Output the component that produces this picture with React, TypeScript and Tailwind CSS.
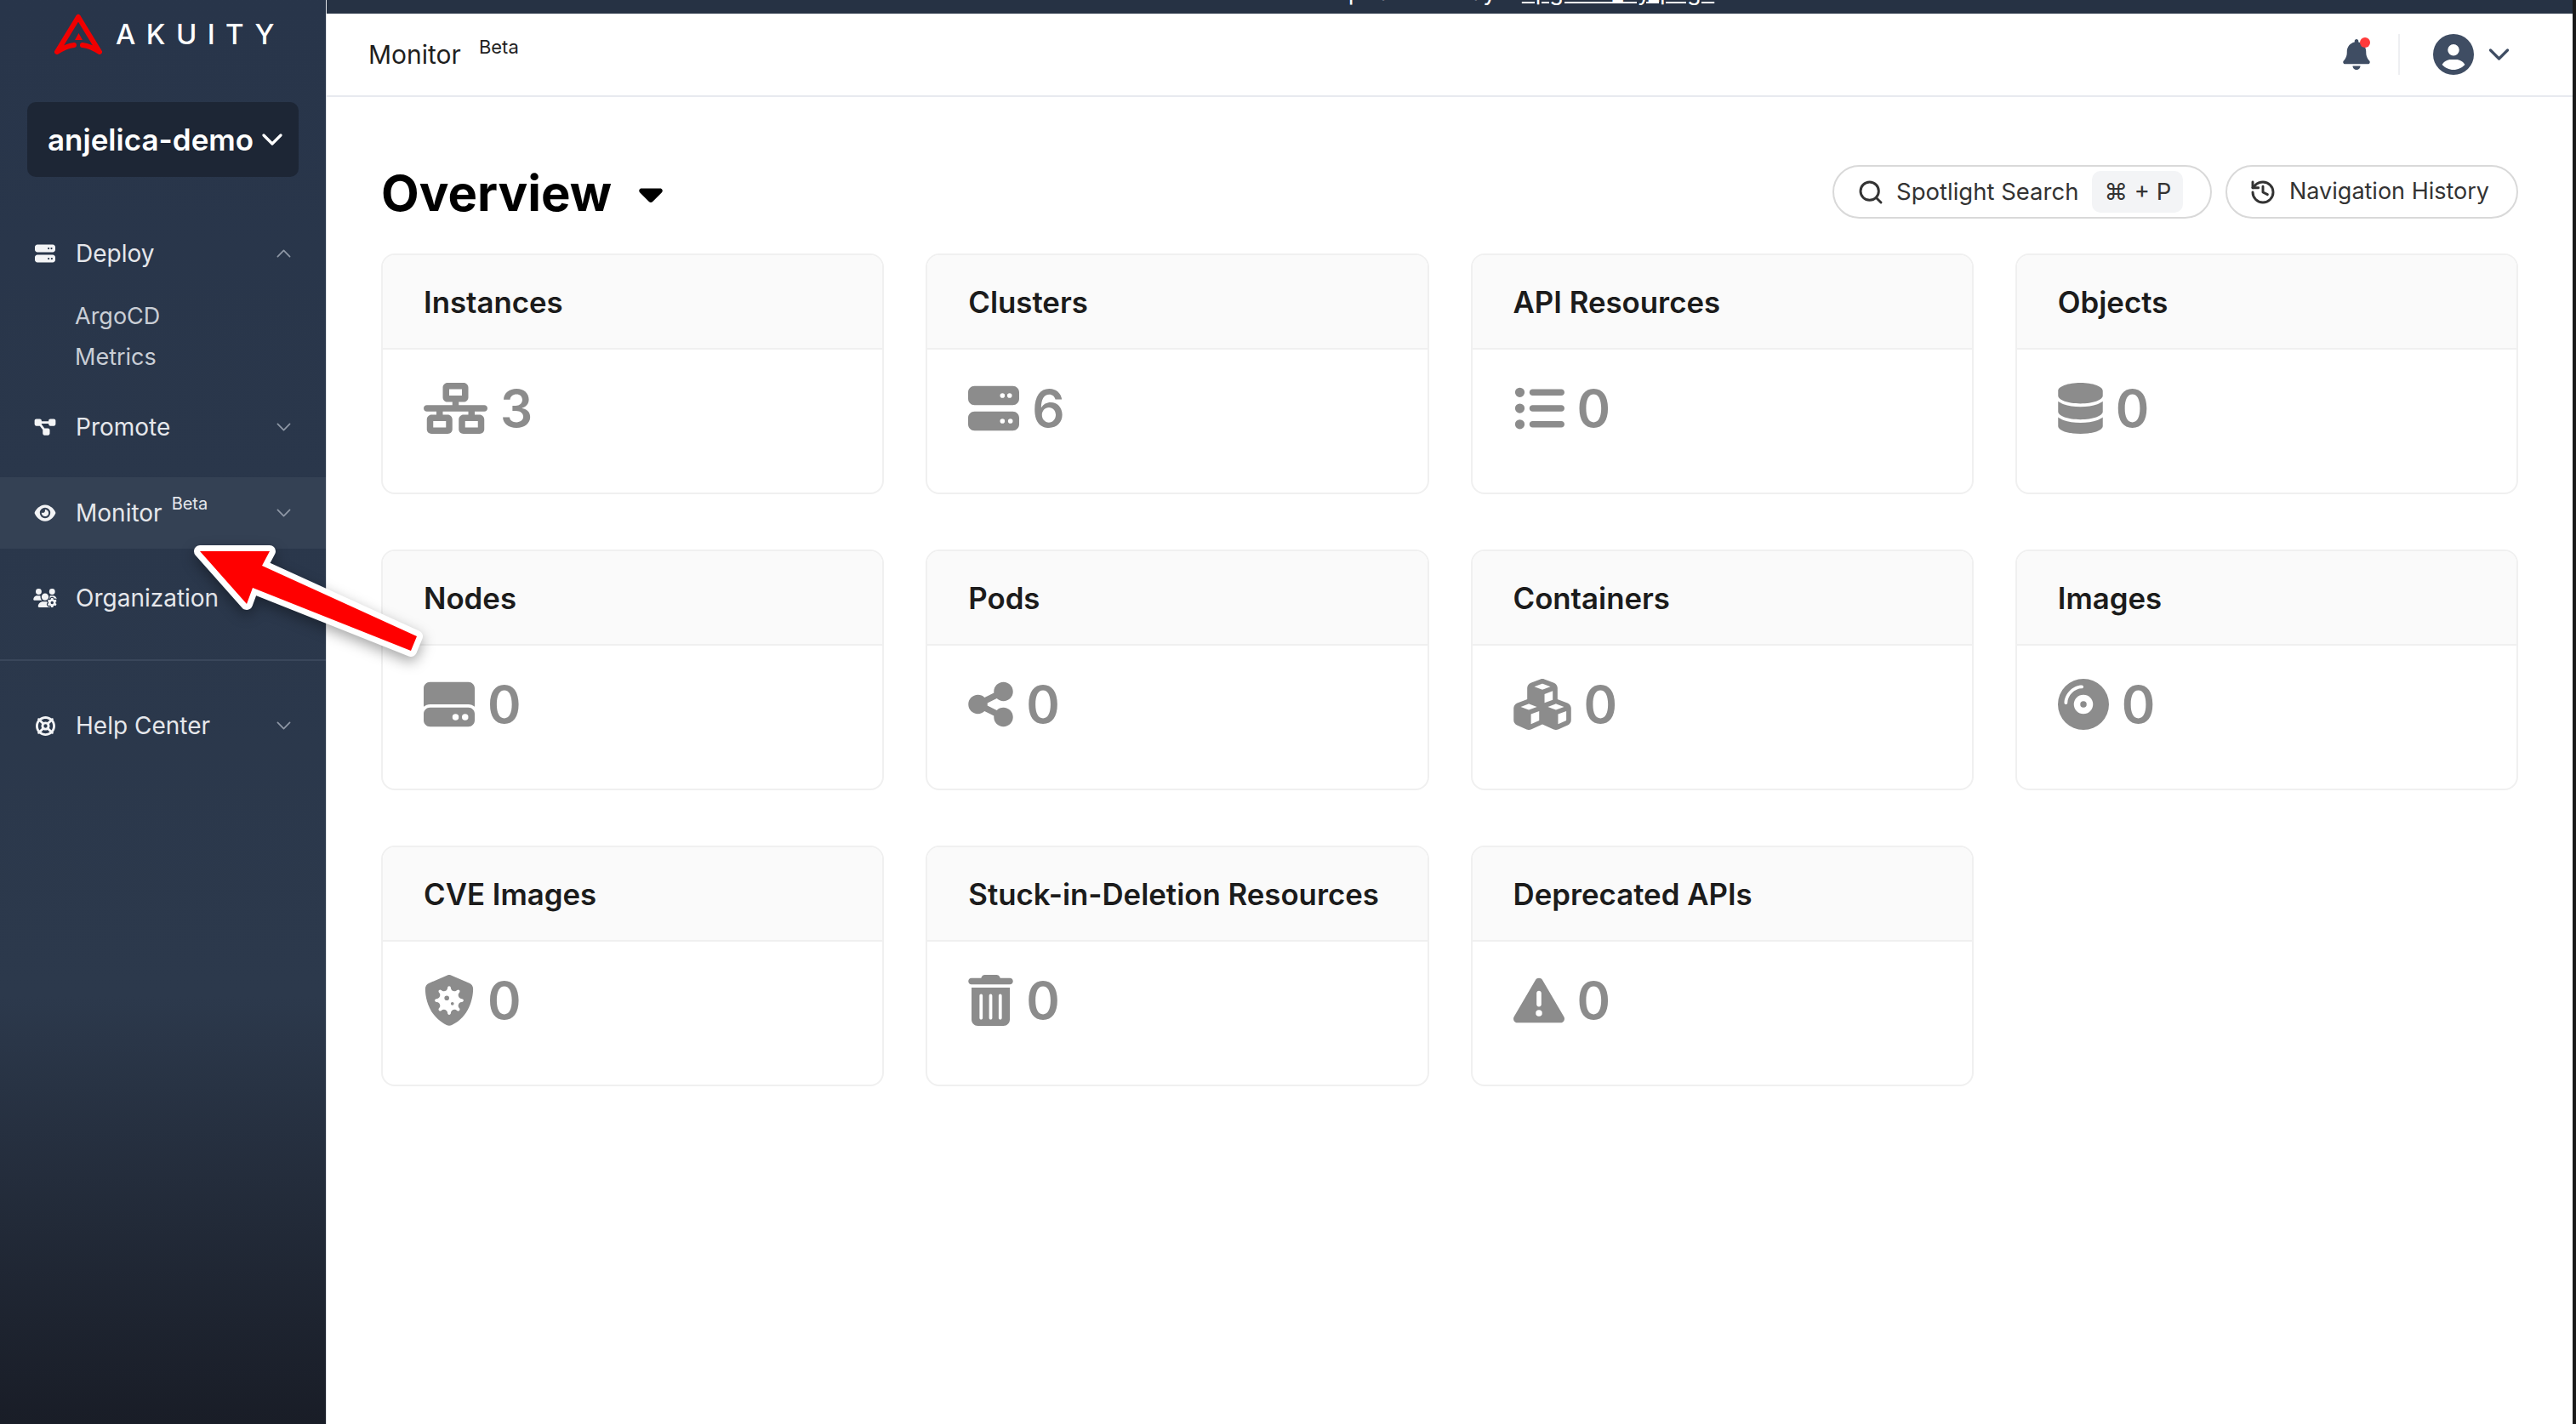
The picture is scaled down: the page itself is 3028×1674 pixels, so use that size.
import { History, Search } from "lucide-react";
import type { ComponentType } from "react";
import {
  FaBell,
  FaCaretDown,
  FaCircleUser,
  FaCompactDisc,
  FaCubes,
  FaDatabase,
  FaDiagramProject,
  FaEye,
  FaHardDrive,
  FaLifeRing,
  FaListUl,
  FaNetworkWired,
  FaServer,
  FaShareNodes,
  FaShieldVirus,
  FaTrashCan,
  FaTriangleExclamation,
  FaUsersGear,
} from "react-icons/fa6";

type Icon = ComponentType<{ className?: string }>;
type Stat = { title: string; value: number; icon: Icon; iconClass: string };

const stats: Stat[] = [
  { title: "Instances", value: 3, icon: FaNetworkWired, iconClass: "w-[75px]" },
  { title: "Clusters", value: 6, icon: FaServer, iconClass: "w-[60px]" },
  { title: "API Resources", value: 0, icon: FaListUl, iconClass: "w-[60px]" },
  { title: "Objects", value: 0, icon: FaDatabase, iconClass: "w-[53px]" },
  { title: "Nodes", value: 0, icon: FaHardDrive, iconClass: "w-[60px]" },
  { title: "Pods", value: 0, icon: FaShareNodes, iconClass: "w-[53px]" },
  { title: "Containers", value: 0, icon: FaCubes, iconClass: "w-[68px]" },
  { title: "Images", value: 0, icon: FaCompactDisc, iconClass: "w-[60px]" },
  { title: "CVE Images", value: 0, icon: FaShieldVirus, iconClass: "w-[60px]" },
  { title: "Stuck-in-Deletion Resources", value: 0, icon: FaTrashCan, iconClass: "w-[53px]" },
  { title: "Deprecated APIs", value: 0, icon: FaTriangleExclamation, iconClass: "w-[60px]" },
];

function Chevron({ up, weight = 2.4, className }: { up?: boolean; weight?: number; className?: string }) {
  return (
    <svg viewBox="0 0 24 14" fill="none" stroke="currentColor" strokeWidth={weight} strokeLinecap="round" strokeLinejoin="round" className={className}>
      <path d={up ? "M2 12 L12 2 L22 12" : "M2 2 L12 12 L22 2"} />
    </svg>
  );
}

function Logo() {
  return (
    <div className="flex h-[48px] items-center pl-[64px]">
      <svg viewBox="0 0 56 48" fill="none" className="h-[48px] w-[56px]">
        <path
          d="M28 4 L3 45 Q14 38 23 37 M28 4 L53 45 Q42 38 33 37"
          stroke="#f00000"
          strokeWidth="6"
          strokeLinecap="round"
          strokeLinejoin="round"
        />
        <path d="M28.5 23 L33 31 L24 31 Z" fill="#f00000" />
      </svg>
      <span className="ml-[16px] text-[33px] leading-none font-medium tracking-[12.4px] text-white">AKUITY</span>
    </div>
  );
}

function NavRow({
  icon: RowIcon,
  iconClass,
  label,
  beta,
  open,
  noChevron,
  active,
  className,
}: {
  icon: Icon;
  iconClass: string;
  label: string;
  beta?: boolean;
  open?: boolean;
  noChevron?: boolean;
  active?: boolean;
  className?: string;
}) {
  return (
    <div className={`flex h-[84px] items-center pr-[41px] pl-[40px] ${active ? "bg-[#344154]" : ""} ${className ?? ""}`}>
      <span className="flex w-[26px] shrink-0 justify-center">
        <RowIcon className={`shrink-0 text-[#f3f4f6] ${iconClass}`} />
      </span>
      <span className="ml-[23px] text-[28px] text-[#e5e7eb]">{label}</span>
      {beta && <span className="mb-[22px] ml-[11px] text-[20px] text-[#e5e7eb]">Beta</span>}
      {!noChevron && <Chevron up={open} className="ml-auto h-[10px] w-[17px] text-[#8f98a6]" />}
    </div>
  );
}

function Sidebar() {
  return (
    <aside className="flex w-[384px] shrink-0 flex-col border-r border-[#dfe2e6] bg-linear-to-b from-[#28354a] via-[#2c394c] via-70% to-[#191d27] pt-[16px]">
      <Logo />
      <div className="mx-[32px] mt-[56px] flex h-[88px] items-center justify-between rounded-[10px] bg-[#1d2635] pr-[19px] pl-[24px]">
        <span className="text-[35px] font-semibold text-white">anjelica-demo</span>
        <Chevron weight={3.2} className="h-[14px] w-[24px] text-white" />
      </div>
      <NavRow icon={FaServer} iconClass="h-[24px] w-[24px]" label="Deploy" open className="mt-[48px]" />
      <div className="mt-[14px] flex flex-col gap-[12px] pl-[88px] text-[27px] leading-[36px] text-[#c9ced6]">
        <span>ArgoCD</span>
        <span>Metrics</span>
      </div>
      <NavRow icon={FaDiagramProject} iconClass="h-[22px] w-[26px]" label="Promote" className="mt-[22px]" />
      <NavRow icon={FaEye} iconClass="h-[22px] w-[26px]" label="Monitor" beta active className="mt-[17px]" />
      <NavRow icon={FaUsersGear} iconClass="h-[22px] w-[28px]" label="Organization" noChevron className="mt-[16px]" />
      <div className="mt-[30px] h-[2px] bg-[#3a475b]" />
      <NavRow icon={FaLifeRing} iconClass="h-[23px] w-[23px]" label="Help Center" className="mt-[34px]" />
    </aside>
  );
}

function Header() {
  return (
    <header className="flex h-[98px] shrink-0 items-center border-b-2 border-[#e8eaef] bg-white pr-[74px] pl-[49px]">
      <span className="text-[30px] text-[#1f1f1f]">Monitor</span>
      <span className="mb-[18px] ml-[21px] text-[22px] text-[#1f1f1f]">Beta</span>
      <div className="ml-auto flex items-center">
        <div className="relative">
          <FaBell className="h-[36px] w-[32px] text-[#3f4d63]" />
          <span className="absolute -top-[2px] right-0 h-[12px] w-[12px] rounded-full bg-[#ff3b3b]" />
        </div>
        <div className="mr-[39px] ml-[33px] h-[48px] w-[2px] bg-[#eeeff2]" />
        <FaCircleUser className="h-[48px] w-[48px] text-[#3f4d63]" />
        <Chevron weight={3.2} className="ml-[17px] h-[14px] w-[25px] text-[#3f4d63]" />
      </div>
    </header>
  );
}

function StatCard({ title, value, icon: StatIcon, iconClass }: Stat) {
  return (
    <div className="flex h-[283px] flex-col overflow-hidden rounded-[16px] border-2 border-[#f0f0f0] bg-white">
      <div className="flex h-[111px] shrink-0 items-center border-b-2 border-[#f0f0f0] bg-[#fafafa] px-[48px] pt-[1px] text-[34.8px] font-semibold text-[#1c1c1c]">
        {title}
      </div>
      <div className="flex items-center gap-[15px] px-[48px] pt-[34px] text-[#8c8c8c]">
        <StatIcon className={`h-[60px] shrink-0 ${iconClass}`} />
        <span className="text-[60px] leading-[70px] font-semibold">{value}</span>
      </div>
    </div>
  );
}

function Toolbar() {
  return (
    <div className="flex h-[63px] items-center">
      <h1 className="pt-[4px] text-[58px] font-bold text-black">Overview</h1>
      <FaCaretDown className="mt-[2px] ml-[30px] h-[44px] w-[32px] text-black" />
      <div className="ml-auto flex items-center gap-[16px] text-[27.5px] text-[#333333]">
        <div className="flex h-[63px] w-[446px] items-center rounded-full border-2 border-[#d9d9d9] pl-[27px]">
          <Search className="h-[32px] w-[32px]" strokeWidth={2.2} />
          <span className="ml-[14px]">Spotlight Search</span>
          <span className="ml-[16px] flex h-[49px] w-[107px] items-center justify-center rounded-[10px] bg-[#f3f4f6]">⌘ + P</span>
        </div>
        <div className="flex h-[63px] w-[344px] items-center rounded-full border-2 border-[#d9d9d9] pl-[26px]">
          <History className="h-[32px] w-[32px]" strokeWidth={2.2} />
          <span className="ml-[15px] text-[27px]">Navigation History</span>
        </div>
      </div>
    </div>
  );
}

function Arrow() {
  return (
    <svg className="absolute top-0 left-0 h-[800px] w-[520px] overflow-visible drop-shadow-[0_6px_8px_rgba(0,0,0,0.35)]" viewBox="0 0 520 800">
      <polygon
        points="235,648 317,648 308,665 490,748 483,765 297,691 290,710"
        fill="#ff0000"
        stroke="#ffffff"
        strokeWidth="14"
        strokeLinejoin="round"
        paintOrder="stroke"
      />
    </svg>
  );
}

export default function App() {
  return (
    <div className="relative flex h-screen overflow-hidden bg-[#1a1a1a] pr-[4px] font-['Inter',sans-serif]">
      <Sidebar />
      <div className="flex min-w-0 flex-1 flex-col bg-white">
        <div className="h-[16px] shrink-0 overflow-hidden bg-[#263244] pl-[1180px]">
          <div className="-mt-[28px] text-[28px] leading-[36px] whitespace-nowrap text-white">
            Updated today <span className="ml-[22px] text-[27px] underline">upgrade_by_page</span>
          </div>
        </div>
        <Header />
        <main className="flex-1 px-[64px] pt-[80px]">
          <Toolbar />
          <div className="mt-[41px] grid grid-cols-4 gap-x-[49px] gap-y-[65px]">
            {stats.map((s) => (
              <StatCard key={s.title} {...s} />
            ))}
          </div>
        </main>
      </div>
      <Arrow />
    </div>
  );
}
